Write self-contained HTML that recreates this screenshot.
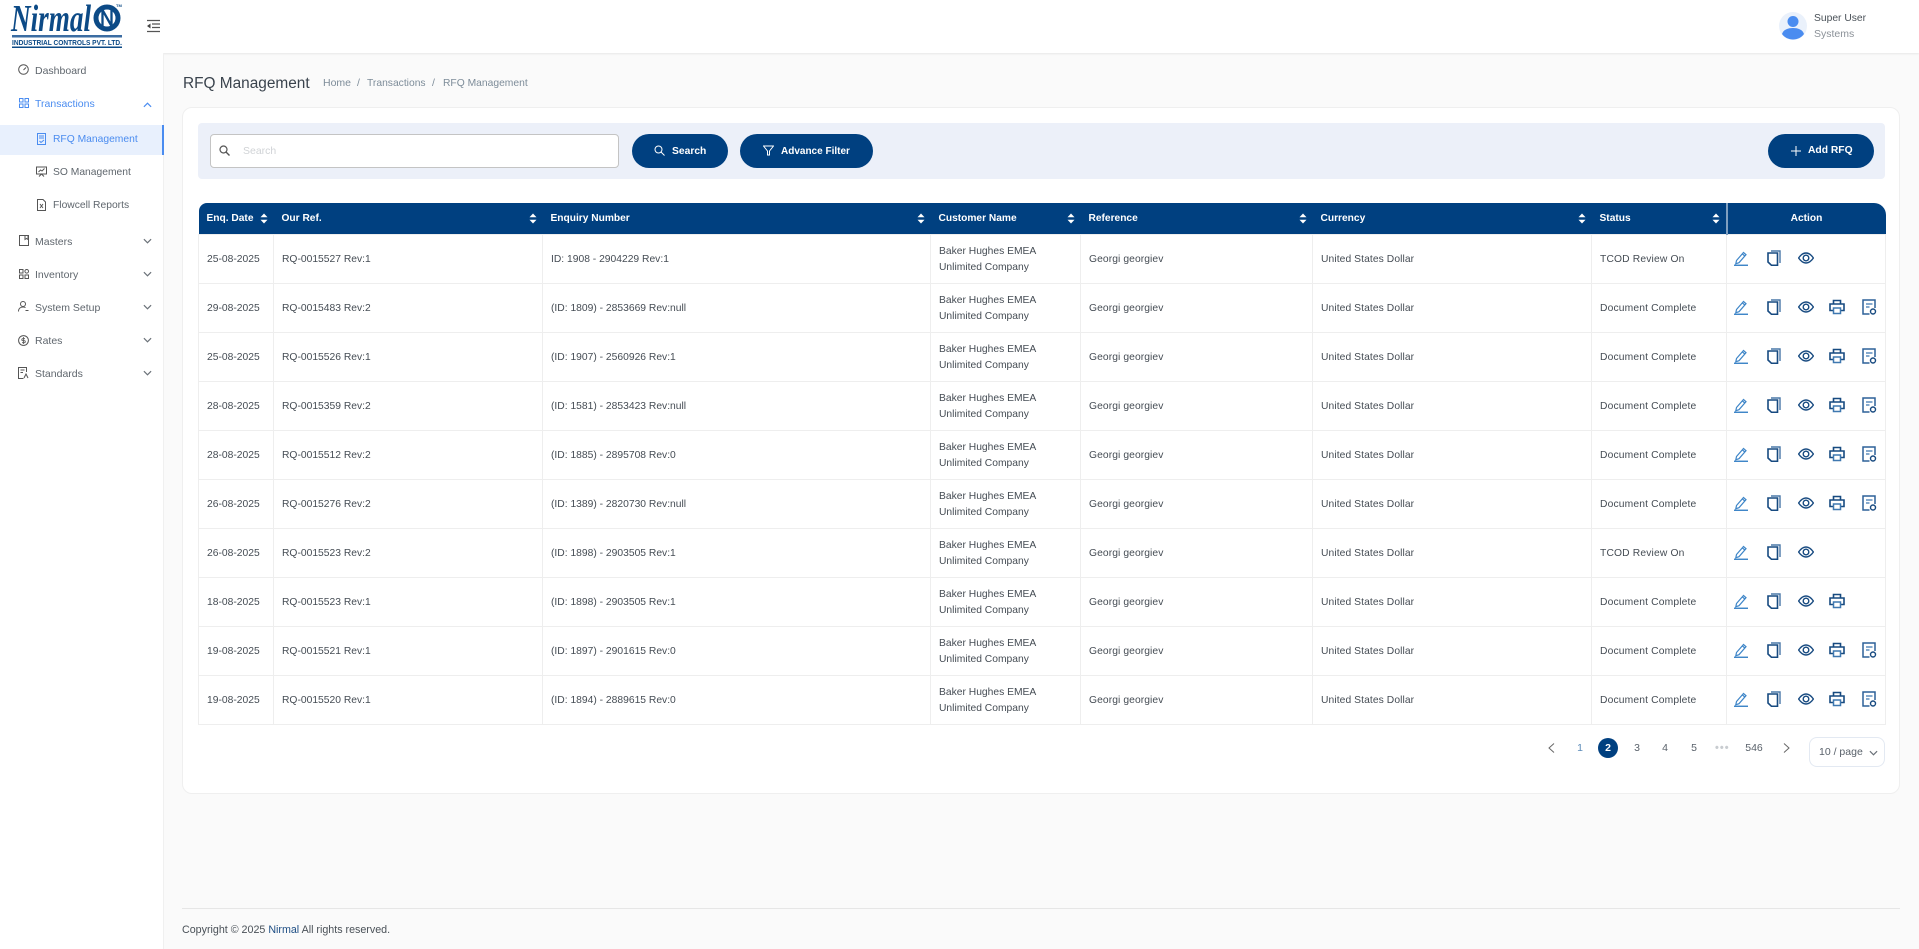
<!DOCTYPE html>
<html><head><meta charset="utf-8"><title>RFQ Management</title>
<style>
*{box-sizing:border-box}
html,body{margin:0;padding:0;width:1919px;height:949px;overflow:hidden;background:#fafafa;font-family:"Liberation Sans",sans-serif;color:#3c4650}
.a{position:absolute;white-space:nowrap}
#hdr{left:0;top:0;width:1919px;height:53px;background:#fff;box-shadow:0 1px 2px rgba(0,0,0,.08)}
#side{left:0;top:53px;width:164px;height:896px;background:#fff;border-right:1px solid #f0f0f0}
.m{font-size:10.5px;color:#5f666d;line-height:14px}
.card{left:182px;top:107px;width:1718px;height:687px;background:#fff;border:1px solid #efefef;border-radius:10px}
.btn{top:134px;height:34px;border-radius:17px;background:#004080;color:#fff;font-size:10.300px;font-weight:bold;line-height:35px}
table{position:absolute;left:198px;top:203px;width:1687px;border-collapse:collapse;table-layout:fixed;font-size:10.300px;color:#454c54}
th{height:31px;background:#004080;color:#fff;font-size:10.200px;font-weight:bold;text-align:left;padding:0 8px;position:relative;border:0}
th:first-child{border-top-left-radius:8px}
th:last-child{border-top-right-radius:12px;text-align:center;border-left:2px solid #7f9fc0}
td{height:49px;padding:3px 8px 0;border:1px solid #eee;line-height:16.500px;position:relative}
td:nth-child(5),td:nth-child(6){letter-spacing:.08px}
td:nth-child(7){letter-spacing:.15px}
.s{position:absolute;right:6px;top:10px;width:8px;height:11px}
.ic{position:absolute;top:15px}
.p{top:741px;font-size:10.500px;color:#59616a;line-height:14px;text-align:center}
</style></head><body>
<svg width="0" height="0" style="position:absolute">
<symbol id="ed" viewBox="0 0 16 16"><path d="M3.500 10.500 10.500 2.500l2.500 2.200-7 8-3.200 1z M9.300 3.800l2.500 2.200" fill="none" stroke="#3f86c8" stroke-width="1.200"/><path d="M1 15.300h14" stroke="#3f86c8" stroke-width="1.500"/></symbol>
<symbol id="co" viewBox="0 0 16 16"><path d="M5 1h9v12" fill="none" stroke="#4a78a8" stroke-width="1.400"/><path d="M2 3h9.500v12.300H5.500L2 12z" fill="#fff" stroke="#174a80" stroke-width="1.600"/></symbol>
<symbol id="ey" viewBox="0 0 16 16"><path d="M.6 8C3 4.500 5.500 3 8 3S13 4.500 15.400 8C13 11.500 10.500 13 8 13S3 11.500 .6 8z" fill="none" stroke="#174a80" stroke-width="1.400"/><circle cx="8" cy="8" r="2.800" fill="none" stroke="#174a80" stroke-width="1.400"/></symbol>
<symbol id="pr" viewBox="0 0 16 16"><path d="M4.500 5V1.500h7V5M4.500 11.500H1V5h14v6.500h-3.500" fill="none" stroke="#174a80" stroke-width="1.600"/><path d="M4.500 9h7v5.500h-7z" fill="none" stroke="#3f78b0" stroke-width="1.500"/></symbol>
<symbol id="re" viewBox="0 0 16 16"><path d="M14 9V1H2v14h6.500" fill="none" stroke="#2d6199" stroke-width="1.500"/><path d="M5 5h6.500M5 8h3.500" stroke="#3f78b0" stroke-width="1.300"/><circle cx="12" cy="12.500" r="2.500" fill="none" stroke="#174a80" stroke-width="1.400"/></symbol>
<symbol id="so" viewBox="0 0 8 11"><path d="M4 .5 7.500 4.300H.5z M4 10.500 .5 6.700h7z" fill="#fff"/></symbol>
<symbol id="ch" viewBox="0 0 10 6"><path d="M1 1l4 4 4-4" fill="none" stroke="#6a7178" stroke-width="1.300"/></symbol>
</svg>

<div id="hdr" class="a"></div>
<svg class="a" style="left:10px;top:2px" width="118" height="48" viewBox="10 2 118 48">
<text x="11" y="31" font-family="Liberation Serif" font-style="italic" font-weight="bold" font-size="38" fill="#0c4a86" textLength="80" lengthAdjust="spacingAndGlyphs">Nirmal</text>
<circle cx="107" cy="18" r="11" fill="none" stroke="#0c4a86" stroke-width="5"/>
<path d="M102.500 9v18M111.500 9v18M102.500 10l9 16" fill="none" stroke="#0c4a86" stroke-width="2.300"/>
<text x="116" y="7" font-size="4" font-weight="bold" fill="#0c4a86" font-family="Liberation Sans">TM</text>
<rect x="12" y="35" width="110" height="2.500" fill="#3b6ca2"/>
<text x="12" y="45" font-family="Liberation Sans" font-weight="bold" font-size="7.500" fill="#0c4a86" textLength="110" lengthAdjust="spacingAndGlyphs">INDUSTRIAL CONTROLS PVT. LTD.</text>
<rect x="12" y="46.500" width="110" height="1.500" fill="#0c4a86"/>
</svg>
<svg class="a" style="left:146px;top:19px" width="15" height="14" viewBox="0 0 15 14"><path d="M1 1.500h13M6 5h8M6 8.500h8M1 12.500h13" stroke="#555" stroke-width="1.300"/><path d="M4.500 4.500 1 7l3.500 2.500z" fill="#444"/></svg>

<svg class="a" style="left:1779px;top:12px" width="28" height="28" viewBox="0 0 28 28"><circle cx="14" cy="14" r="14" fill="#eaf1fb"/><circle cx="14" cy="9.500" r="5.500" fill="#4a8cf0"/><path d="M3 22c1.500-4.500 6-6 11-6s9.500 1.500 11 6c-2.500 3.500-6.500 5.500-11 5.500S5.500 25.500 3 22z" fill="#4a8cf0"/></svg>
<div class="a" style="left:1814px;top:12px;font-size:10.300px;color:#4a5158;line-height:14px">Super User</div>
<div class="a" style="left:1814px;top:27px;font-size:10.500px;color:#8b9198;line-height:14px">Systems</div>

<div id="side" class="a"></div>
<div class="a" style="left:0;top:125px;width:164px;height:30px;background:#e8f0fd;border-right:2px solid #4a8cf0"></div>

<svg class="a" style="left:18px;top:64px" width="11" height="11" viewBox="0 0 11 11"><circle cx="5.500" cy="5.500" r="4.800" fill="none" stroke="#555" stroke-width="1"/><path d="M5.500 6 8 3.500" stroke="#555"/></svg>
<div class="a m" style="left:35px;top:64px">Dashboard</div>
<svg class="a" style="left:19px;top:98px" width="10" height="10" viewBox="0 0 10 10"><path d="M.5.500h3.500v3.500H.5zM6 .5h3.500v3.500H6zM.5 6h3.500v3.500H.5zM6 6h3.500v3.500H6z" fill="none" stroke="#4a8cf0"/></svg>
<div class="a m" style="left:35px;top:97px;color:#4a8cf0">Transactions</div>
<svg class="a" style="left:143px;top:102px" width="9" height="6" viewBox="0 0 10 6"><path d="M1 5l4-4 4 4" fill="none" stroke="#4a8cf0" stroke-width="1.300"/></svg>

<svg class="a" style="left:37px;top:133px" width="9" height="12" viewBox="0 0 9 12"><path d="M.5.500h8v11h-8zM2 3h5M2 5h5M2.500 8l1.500 1.500L7 7" fill="none" stroke="#4a8cf0"/></svg>
<div class="a m" style="left:53px;top:133px;color:#4a8cf0;font-size:10.300px">RFQ Management</div>
<svg class="a" style="left:36px;top:166px" width="11" height="11" viewBox="0 0 11 11"><path d="M.5 1h10v7H.5zM3 10.500 5.500 8l2.500 2.500M2.500 6l2-2 1.500 1 2.500-2.500" fill="none" stroke="#555"/></svg>
<div class="a m" style="left:53px;top:166px;font-size:10.300px">SO Management</div>
<svg class="a" style="left:37px;top:199px" width="9" height="12" viewBox="0 0 9 12"><path d="M.5.500h5.500l2.500 2.500v8.500h-8z M3 5l3 4M6 5 3 9" fill="none" stroke="#555"/></svg>
<div class="a m" style="left:53px;top:199px;font-size:10.300px">Flowcell Reports</div>

<svg class="a" style="left:19px;top:235px" width="10" height="11" viewBox="0 0 10 11"><path d="M.5.500h9v10h-9zM6 .5v4L7.500 3.500 9 4.500V.5" fill="none" stroke="#555"/></svg>
<div class="a m" style="left:35px;top:235px">Masters</div>
<svg class="a" style="left:19px;top:269px" width="10" height="10" viewBox="0 0 10 10"><path d="M.5.500h3.500v3.500H.5zM.5 6h3.500v3.500H.5zM6 6h3.500v3.500H6z" fill="none" stroke="#555"/><circle cx="7.700" cy="2.300" r="1.800" fill="none" stroke="#555"/></svg>
<div class="a m" style="left:35px;top:268px">Inventory</div>
<svg class="a" style="left:18px;top:301px" width="11" height="11" viewBox="0 0 11 11"><circle cx="5" cy="3" r="2.500" fill="none" stroke="#555"/><path d="M.5 10.500c0-3 2-4.500 4.500-4.500 1 0 2 .2 2.500 .7M7.500 9.500h3" fill="none" stroke="#555"/></svg>
<div class="a m" style="left:35px;top:301px">System Setup</div>
<svg class="a" style="left:18px;top:335px" width="11" height="11" viewBox="0 0 11 11"><circle cx="5.500" cy="5.500" r="4.900" fill="none" stroke="#555"/><path d="M5.500 2v7M7 3.700H4.800a1 1 0 000 2h1.500a1 1 0 010 2H4" fill="none" stroke="#555" stroke-width=".8"/></svg>
<div class="a m" style="left:35px;top:334px">Rates</div>
<svg class="a" style="left:18px;top:367px" width="11" height="12" viewBox="0 0 11 12"><path d="M8.500 5V.5H.5v11h5M2.500 3h4M2.500 5.500h2.500M6 11l2-4 2 4" fill="none" stroke="#555"/></svg>
<div class="a m" style="left:35px;top:367px">Standards</div>
<svg class="a" style="left:143px;top:238px" width="9" height="6"><use href="#ch"/></svg>
<svg class="a" style="left:143px;top:271px" width="9" height="6"><use href="#ch"/></svg>
<svg class="a" style="left:143px;top:304px" width="9" height="6"><use href="#ch"/></svg>
<svg class="a" style="left:143px;top:337px" width="9" height="6"><use href="#ch"/></svg>
<svg class="a" style="left:143px;top:370px" width="9" height="6"><use href="#ch"/></svg>

<div class="a" style="left:183px;top:74px;font-size:15.400px;line-height:19px;color:#3a434d">RFQ Management</div>
<div class="a" style="left:323px;top:77px;font-size:10.500px;line-height:13px;color:#7d8c99">Home</div>
<div class="a" style="left:357px;top:77px;font-size:10.500px;line-height:13px;color:#7d8c99">/</div>
<div class="a" style="left:367px;top:77px;font-size:10.300px;line-height:13px;color:#7d8c99">Transactions</div>
<div class="a" style="left:432px;top:77px;font-size:10.500px;line-height:13px;color:#7d8c99">/</div>
<div class="a" style="left:443px;top:77px;font-size:10.300px;line-height:13px;color:#7d8c99">RFQ Management</div>

<div class="a card"></div>
<div class="a" style="left:198px;top:123px;width:1687px;height:56px;background:#ecf0f9;border-radius:4px"></div>
<div class="a" style="left:210px;top:134px;width:409px;height:34px;background:#fff;border:1px solid #c4c4c4;border-radius:4px"></div>
<svg class="a" style="left:219px;top:145px" width="11" height="11" viewBox="0 0 11 11"><circle cx="4.500" cy="4.500" r="3.500" fill="none" stroke="#555" stroke-width="1.200"/><path d="M7 7l3.500 3.500" stroke="#555" stroke-width="1.400"/></svg>
<div class="a" style="left:243px;top:144px;font-size:10.500px;line-height:14px;color:#d0d3d6">Search</div>

<div class="a btn" style="left:632px;width:96px;padding-left:40px">Search</div>
<svg class="a" style="left:654px;top:145px" width="11" height="11" viewBox="0 0 11 11"><circle cx="4.500" cy="4.500" r="3.500" fill="none" stroke="#fff"/><path d="M7 7l3.500 3.500" stroke="#fff"/></svg>
<div class="a btn" style="left:740px;width:133px;padding-left:41px;font-size:10px">Advance Filter</div>
<svg class="a" style="left:763px;top:145px" width="11" height="11" viewBox="0 0 11 11"><path d="M.5 1h10L6.500 6v4h-2V6z" fill="none" stroke="#fff"/></svg>
<div class="a btn" style="left:1768px;width:106px;padding-left:40px;line-height:34px">Add RFQ</div>
<svg class="a" style="left:1791px;top:146px" width="10" height="10"><path d="M5 0v10M0 5h10" stroke="#fff"/></svg>

<table>
<colgroup><col style="width:75px"><col style="width:269px"><col style="width:388px"><col style="width:150px"><col style="width:232px"><col style="width:279px"><col style="width:135px"><col style="width:159px"></colgroup>
<thead><tr>
<th>Enq. Date<svg class="s"><use href="#so"/></svg></th><th>Our Ref.<svg class="s"><use href="#so"/></svg></th><th>Enquiry Number<svg class="s"><use href="#so"/></svg></th><th>Customer Name<svg class="s"><use href="#so"/></svg></th><th>Reference<svg class="s"><use href="#so"/></svg></th><th>Currency<svg class="s"><use href="#so"/></svg></th><th>Status<svg class="s"><use href="#so"/></svg></th><th>Action</th>
</tr></thead>
<tbody>
<tr><td>25-08-2025</td><td>RQ-0015527 Rev:1</td><td>ID: 1908 - 2904229 Rev:1</td><td>Baker Hughes EMEA<br>Unlimited Company</td><td>Georgi georgiev</td><td>United States Dollar</td><td>TCOD Review On</td><td><svg class="ic" style="left:6px" width="16" height="16"><use href="#ed"/></svg><svg class="ic" style="left:39px" width="16" height="16"><use href="#co"/></svg><svg class="ic" style="left:71px" width="16" height="16"><use href="#ey"/></svg></td></tr>
<tr><td>29-08-2025</td><td>RQ-0015483 Rev:2</td><td>(ID: 1809) - 2853669 Rev:null</td><td>Baker Hughes EMEA<br>Unlimited Company</td><td>Georgi georgiev</td><td>United States Dollar</td><td>Document Complete</td><td><svg class="ic" style="left:6px" width="16" height="16"><use href="#ed"/></svg><svg class="ic" style="left:39px" width="16" height="16"><use href="#co"/></svg><svg class="ic" style="left:71px" width="16" height="16"><use href="#ey"/></svg><svg class="ic" style="left:102px" width="16" height="16"><use href="#pr"/></svg><svg class="ic" style="left:134px" width="16" height="16"><use href="#re"/></svg></td></tr>
<tr><td>25-08-2025</td><td>RQ-0015526 Rev:1</td><td>(ID: 1907) - 2560926 Rev:1</td><td>Baker Hughes EMEA<br>Unlimited Company</td><td>Georgi georgiev</td><td>United States Dollar</td><td>Document Complete</td><td><svg class="ic" style="left:6px" width="16" height="16"><use href="#ed"/></svg><svg class="ic" style="left:39px" width="16" height="16"><use href="#co"/></svg><svg class="ic" style="left:71px" width="16" height="16"><use href="#ey"/></svg><svg class="ic" style="left:102px" width="16" height="16"><use href="#pr"/></svg><svg class="ic" style="left:134px" width="16" height="16"><use href="#re"/></svg></td></tr>
<tr><td>28-08-2025</td><td>RQ-0015359 Rev:2</td><td>(ID: 1581) - 2853423 Rev:null</td><td>Baker Hughes EMEA<br>Unlimited Company</td><td>Georgi georgiev</td><td>United States Dollar</td><td>Document Complete</td><td><svg class="ic" style="left:6px" width="16" height="16"><use href="#ed"/></svg><svg class="ic" style="left:39px" width="16" height="16"><use href="#co"/></svg><svg class="ic" style="left:71px" width="16" height="16"><use href="#ey"/></svg><svg class="ic" style="left:102px" width="16" height="16"><use href="#pr"/></svg><svg class="ic" style="left:134px" width="16" height="16"><use href="#re"/></svg></td></tr>
<tr><td>28-08-2025</td><td>RQ-0015512 Rev:2</td><td>(ID: 1885) - 2895708 Rev:0</td><td>Baker Hughes EMEA<br>Unlimited Company</td><td>Georgi georgiev</td><td>United States Dollar</td><td>Document Complete</td><td><svg class="ic" style="left:6px" width="16" height="16"><use href="#ed"/></svg><svg class="ic" style="left:39px" width="16" height="16"><use href="#co"/></svg><svg class="ic" style="left:71px" width="16" height="16"><use href="#ey"/></svg><svg class="ic" style="left:102px" width="16" height="16"><use href="#pr"/></svg><svg class="ic" style="left:134px" width="16" height="16"><use href="#re"/></svg></td></tr>
<tr><td>26-08-2025</td><td>RQ-0015276 Rev:2</td><td>(ID: 1389) - 2820730 Rev:null</td><td>Baker Hughes EMEA<br>Unlimited Company</td><td>Georgi georgiev</td><td>United States Dollar</td><td>Document Complete</td><td><svg class="ic" style="left:6px" width="16" height="16"><use href="#ed"/></svg><svg class="ic" style="left:39px" width="16" height="16"><use href="#co"/></svg><svg class="ic" style="left:71px" width="16" height="16"><use href="#ey"/></svg><svg class="ic" style="left:102px" width="16" height="16"><use href="#pr"/></svg><svg class="ic" style="left:134px" width="16" height="16"><use href="#re"/></svg></td></tr>
<tr><td>26-08-2025</td><td>RQ-0015523 Rev:2</td><td>(ID: 1898) - 2903505 Rev:1</td><td>Baker Hughes EMEA<br>Unlimited Company</td><td>Georgi georgiev</td><td>United States Dollar</td><td>TCOD Review On</td><td><svg class="ic" style="left:6px" width="16" height="16"><use href="#ed"/></svg><svg class="ic" style="left:39px" width="16" height="16"><use href="#co"/></svg><svg class="ic" style="left:71px" width="16" height="16"><use href="#ey"/></svg></td></tr>
<tr><td>18-08-2025</td><td>RQ-0015523 Rev:1</td><td>(ID: 1898) - 2903505 Rev:1</td><td>Baker Hughes EMEA<br>Unlimited Company</td><td>Georgi georgiev</td><td>United States Dollar</td><td>Document Complete</td><td><svg class="ic" style="left:6px" width="16" height="16"><use href="#ed"/></svg><svg class="ic" style="left:39px" width="16" height="16"><use href="#co"/></svg><svg class="ic" style="left:71px" width="16" height="16"><use href="#ey"/></svg><svg class="ic" style="left:102px" width="16" height="16"><use href="#pr"/></svg></td></tr>
<tr><td>19-08-2025</td><td>RQ-0015521 Rev:1</td><td>(ID: 1897) - 2901615 Rev:0</td><td>Baker Hughes EMEA<br>Unlimited Company</td><td>Georgi georgiev</td><td>United States Dollar</td><td>Document Complete</td><td><svg class="ic" style="left:6px" width="16" height="16"><use href="#ed"/></svg><svg class="ic" style="left:39px" width="16" height="16"><use href="#co"/></svg><svg class="ic" style="left:71px" width="16" height="16"><use href="#ey"/></svg><svg class="ic" style="left:102px" width="16" height="16"><use href="#pr"/></svg><svg class="ic" style="left:134px" width="16" height="16"><use href="#re"/></svg></td></tr>
<tr><td>19-08-2025</td><td>RQ-0015520 Rev:1</td><td>(ID: 1894) - 2889615 Rev:0</td><td>Baker Hughes EMEA<br>Unlimited Company</td><td>Georgi georgiev</td><td>United States Dollar</td><td>Document Complete</td><td><svg class="ic" style="left:6px" width="16" height="16"><use href="#ed"/></svg><svg class="ic" style="left:39px" width="16" height="16"><use href="#co"/></svg><svg class="ic" style="left:71px" width="16" height="16"><use href="#ey"/></svg><svg class="ic" style="left:102px" width="16" height="16"><use href="#pr"/></svg><svg class="ic" style="left:134px" width="16" height="16"><use href="#re"/></svg></td></tr>
</tbody></table>

<svg class="a" style="left:1548px;top:743px" width="7" height="10" viewBox="0 0 7 10"><path d="M6 .5 1 5l5 4.500" fill="none" stroke="#666"/></svg>
<div class="a p" style="left:1570px;width:20px;color:#5a8ab8">1</div>
<div class="a" style="left:1598px;top:738px;width:20px;height:20px;border-radius:50%;background:#004080;color:#fff;font-size:10.500px;font-weight:bold;line-height:20px;text-align:center">2</div>
<div class="a p" style="left:1627px;width:20px">3</div>
<div class="a p" style="left:1655px;width:20px">4</div>
<div class="a p" style="left:1684px;width:20px">5</div>
<div class="a" style="left:1715px;top:741px;font-size:11px;letter-spacing:1px;color:#c8ccd0;line-height:14px;font-weight:bold">•••</div>
<div class="a p" style="left:1741px;width:26px">546</div>
<svg class="a" style="left:1783px;top:743px" width="7" height="10" viewBox="0 0 7 10"><path d="M1 .5 6 5 1 9.500" fill="none" stroke="#666"/></svg>
<div class="a" style="left:1809px;top:737px;width:76px;height:30px;background:#fff;border:1px solid #e3e9f2;border-radius:8px;font-size:10.500px;line-height:28px;padding-left:9px;color:#59616a">10 / page</div>
<svg class="a" style="left:1869px;top:750px" width="9" height="6"><use href="#ch"/></svg>

<div class="a" style="left:182px;top:908px;width:1718px;height:1px;background:#e6e6e6"></div>
<div class="a" style="left:182px;top:923px;font-size:10.700px;line-height:14px;color:#4a5158">Copyright © 2025 <span style="color:#1f4f85">Nirmal</span> All rights reserved.</div>
</body></html>
